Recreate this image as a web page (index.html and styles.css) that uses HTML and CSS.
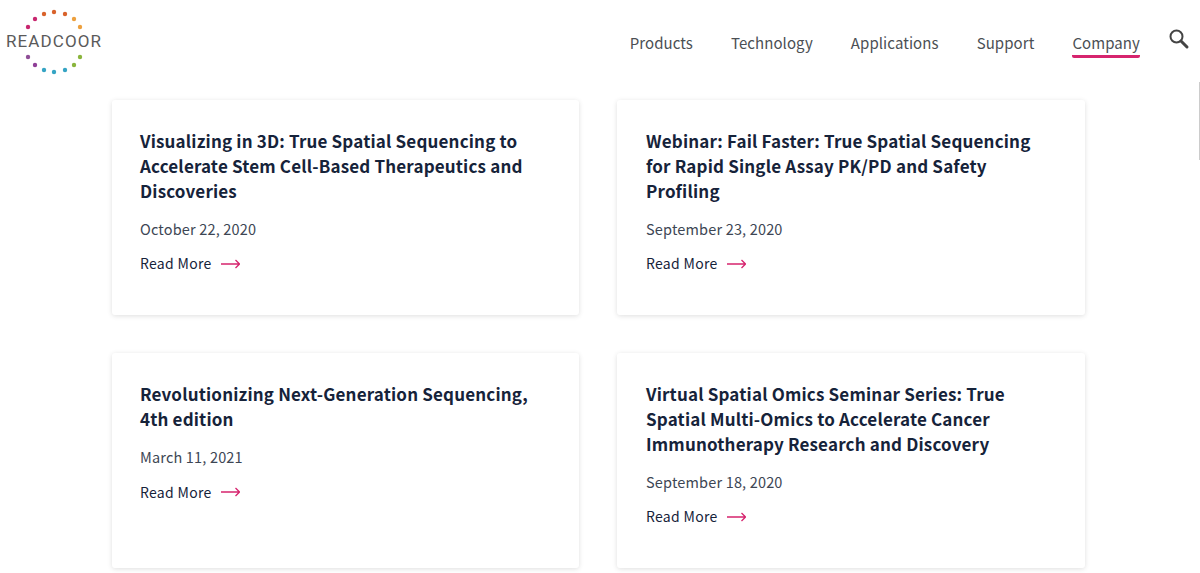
FILE: index.html
```html
<!DOCTYPE html>
<html lang="en">
<head>
    <meta charset="UTF-8">
    <meta name="viewport" content="width=device-width, initial-scale=1.0">
    <title>ReadCoor Events</title>
    <link rel="stylesheet" href="styles.css">
</head>
<body>

    <!-- Navbar -->
    <nav class="navbar">
        <a href="#" class="logo">
            <svg class="logo-dots" width="98" height="76" viewBox="0 0 98 76">
                <circle cx="48" cy="12" r="2.2" fill="#d9622b"/>
                <circle cx="59" cy="14" r="2.2" fill="#d9622b"/>
                <circle cx="38" cy="14" r="2.2" fill="#d9622b"/>
                <circle cx="29" cy="19" r="2.2" fill="#c8266f"/>
                <circle cx="22" cy="27" r="2.2" fill="#c8266f"/>
                <circle cx="68" cy="19" r="2.2" fill="#eda03e"/>
                <circle cx="74" cy="27" r="2.2" fill="#eda03e"/>
                <circle cx="22" cy="57" r="2.2" fill="#8f4f97"/>
                <circle cx="29" cy="65" r="2.2" fill="#8f3f97"/>
                <circle cx="38" cy="70" r="2.2" fill="#35a4c4"/>
                <circle cx="48" cy="72" r="2.2" fill="#35a4c4"/>
                <circle cx="59" cy="70" r="2.2" fill="#35a4c4"/>
                <circle cx="68" cy="65" r="2.2" fill="#8ab53c"/>
                <circle cx="74" cy="57" r="2.2" fill="#8ab53c"/>
            </svg>
            <span class="logo-text">READCOOR</span>
        </a>
        <div class="menu">
            <a href="#">Products</a>
            <a href="#">Technology</a>
            <a href="#">Applications</a>
            <a href="#">Support</a>
            <a href="#" class="active">Company</a>
        </div>
        <a href="#" class="search">
            <svg width="22" height="22" viewBox="0 0 22 22" fill="none" stroke="#444" stroke-width="2">
                <circle cx="8.500" cy="8.500" r="6"/>
                <path d="M13 13l6 6" stroke-width="3" stroke-linecap="round"/>
            </svg>
        </a>
    </nav>

    <!-- Cards -->
    <div class="cards">
        <div class="card">
            <h2>Visualizing in 3D: True Spatial Sequencing to Accelerate Stem Cell-Based Therapeutics and Discoveries</h2>
            <p class="date">October 22, 2020</p>
            <a href="#" class="read-more">Read More
                <svg width="19" height="10" viewBox="0 0 19 10" fill="none" stroke="#d6246e" stroke-width="1.300"><path d="M0 5h18.500M14.500 1l4 4-4 4"/></svg>
            </a>
        </div>
        <div class="card">
            <h2>Webinar: Fail Faster: True Spatial Sequencing for Rapid Single Assay PK/PD and Safety Profiling</h2>
            <p class="date">September 23, 2020</p>
            <a href="#" class="read-more">Read More
                <svg width="19" height="10" viewBox="0 0 19 10" fill="none" stroke="#d6246e" stroke-width="1.300"><path d="M0 5h18.500M14.500 1l4 4-4 4"/></svg>
            </a>
        </div>
        <div class="card">
            <h2>Revolutionizing Next-Generation Sequencing, 4th edition</h2>
            <p class="date">March 11, 2021</p>
            <a href="#" class="read-more">Read More
                <svg width="19" height="10" viewBox="0 0 19 10" fill="none" stroke="#d6246e" stroke-width="1.300"><path d="M0 5h18.500M14.500 1l4 4-4 4"/></svg>
            </a>
        </div>
        <div class="card">
            <h2>Virtual Spatial Omics Seminar Series: True Spatial Multi-Omics to Accelerate Cancer Immunotherapy Research and Discovery</h2>
            <p class="date">September 18, 2020</p>
            <a href="#" class="read-more">Read More
                <svg width="19" height="10" viewBox="0 0 19 10" fill="none" stroke="#d6246e" stroke-width="1.300"><path d="M0 5h18.500M14.500 1l4 4-4 4"/></svg>
            </a>
        </div>
    </div>

    <div class="scroll-thumb"></div>

</body>
</html>
```
FILE: styles.css
```css
/* Reset and global styling */
* {
    margin: 0;
    padding: 0;
    box-sizing: border-box;
}
html, body {
    height: 573px;
    overflow: hidden;
}
body {
    font-family: "Noto Sans CJK SC", "Open Sans", sans-serif;
    background-color: #fff;
    color: #1a2433;
}
a {
    text-decoration: none;
    color: inherit;
}

/* Navbar styling */
.navbar {
    height: 100px;
    display: flex;
    align-items: flex-start;
    padding-left: 6px;
}
.logo {
    position: relative;
    width: 98px;
    height: 76px;
    display: block;
}
.logo-dots {
    display: block;
}
.logo-text {
    position: absolute;
    left: 0;
    top: 31px;
    font-family: "Roboto", sans-serif;
    font-size: 17px;
    line-height: 20px;
    letter-spacing: 1.1px;
    color: #5a5a5a;
}
.menu {
    margin-left: auto;
    margin-top: 32px;
    display: flex;
    gap: 38px;
}
.menu a {
    font-size: 15px;
    line-height: 22px;
    letter-spacing: 0.08px;
    color: #4b4f54;
    padding-bottom: 1px;
    border-bottom: 3px solid transparent;
}
.menu a.active {
    border-bottom-color: #d6246e;
    border-radius: 2px;
}
.search {
    margin: 28px 10px 0 28px;
    display: block;
}

/* Card grid */
.cards {
    display: grid;
    grid-template-columns: 467px 468px;
    grid-auto-rows: 215px;
    gap: 38px;
    margin-left: 112px;
}
.card {
    background-color: #fff;
    padding: 29px 28px;
    border-radius: 3px;
    box-shadow: 0 1px 5px rgba(0, 0, 0, 0.13);
}
.card:nth-child(even) {
    padding-left: 29px;
}
.card h2 {
    font-size: 17px;
    line-height: 24.800px;
    font-weight: 600;
    letter-spacing: 0.17px;
    color: #16233a;
}
.date {
    margin-top: 14.500px;
    font-size: 14.500px;
    line-height: 22px;
    letter-spacing: 0.17px;
    color: #3d4654;
}
.read-more {
    margin-top: 13.500px;
    display: flex;
    align-items: center;
    gap: 9px;
    font-size: 14px;
    line-height: 21px;
    letter-spacing: 0.3px;
    color: #16233a;
}

/* Leftover scrollbar thumb at the window edge */
.scroll-thumb {
    position: absolute;
    top: 82px;
    right: 0;
    width: 1px;
    height: 78px;
    background-color: #ccc;
}
```
